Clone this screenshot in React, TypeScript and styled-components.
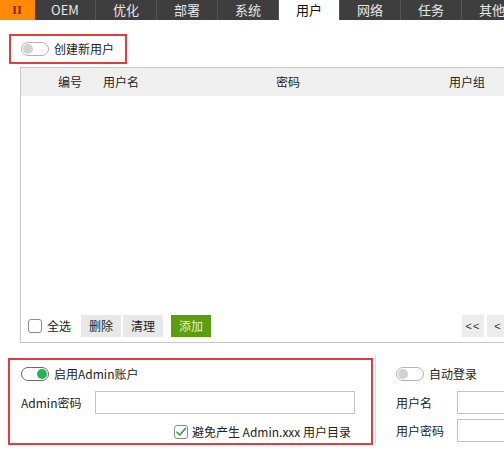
import React from "react";
import styled, { createGlobalStyle } from "styled-components";

const Global = createGlobalStyle`
  html, body { margin: 0; padding: 0; background: #fff; overflow: hidden; }
  body {
    font-family: "Noto Sans CJK SC", "Open Sans", sans-serif;
    font-size: 12px;
    color: #222;
  }
  * { box-sizing: border-box; }
`;

const Page = styled.div`
  width: 560px;
  height: 460px;
  display: flex;
  flex-direction: column;
`;

const TabBar = styled.div`
  display: flex;
  height: 20px;
  background: #3e3e3e;
`;

const Tab = styled.div<{ $active?: boolean; $brand?: boolean }>`
  flex: none;
  width: ${(p) => (p.$brand ? 35 : 61)}px;
  height: 20px;
  border-right: 1px solid ${(p) => (p.$brand ? "#ff8a00" : "#565656")};
  background: ${(p) => (p.$brand ? "#ff8a00" : p.$active ? "#ffffff" : "#3e3e3e")};
  color: ${(p) => (p.$brand ? "#8a2a0c" : p.$active ? "#111" : "#e8e8e8")};
  font-family: ${(p) => (p.$brand ? '"Liberation Serif", serif' : '"Noto Sans CJK SC", "Open Sans", sans-serif')};
  font-weight: ${(p) => (p.$brand ? 700 : 400)};
  font-size: 13px;
  line-height: 20px;
  display: flex;
  align-items: center;
  justify-content: center;
`;

const RedBox = styled.div<{ $w: number; $h: number }>`
  width: ${(p) => p.$w}px;
  height: ${(p) => p.$h}px;
  border: 2px solid #e23c3f;
  flex: none;
`;

const TopSection = styled.div`
  margin: 14px 0 0 9px;
`;

const ToggleRow = styled.div`
  display: flex;
  align-items: center;
  gap: 5px;
  height: 100%;
  padding-left: 10px;
  line-height: 16px;
`;

const Toggle = styled.div<{ $on?: boolean }>`
  position: relative;
  width: 28px;
  height: 14px;
  border-radius: 7px;
  border: 1px solid ${(p) => (p.$on ? "#6a6a6a" : "#b4b4b4")};
  background: #fff;
  flex: none;
  &::after {
    content: "";
    position: absolute;
    top: 1px;
    ${(p) => (p.$on ? "right: 1px;" : "left: 1px;")}
    width: 10px;
    height: 10px;
    border-radius: 50%;
    background: ${(p) => (p.$on ? "#27b450" : "#d2d2d2")};
  }
`;

const Table = styled.div`
  margin: 3px 0 0 20px;
  width: 540px;
  height: 276px;
  border: 1px solid #c9c9c9;
  border-right: none;
  display: flex;
  flex-direction: column;
`;

const HeaderRow = styled.div`
  height: 28px;
  background: #efefef;
  display: flex;
  align-items: center;
  line-height: 16px;
`;

const Cell = styled.div<{ $w: number; $align?: string }>`
  flex: none;
  width: ${(p) => p.$w}px;
  text-align: ${(p) => p.$align || "left"};
  white-space: nowrap;
`;

const TableBody = styled.div`
  flex: 1;
`;

const Footer = styled.div`
  display: flex;
  align-items: center;
  height: 22px;
  margin: 0 0 5px 7px;
  line-height: 16px;
`;

const CheckBox = styled.div`
  width: 14px;
  height: 14px;
  border: 1px solid #8a8a8a;
  border-radius: 3px;
  background: #fff;
  flex: none;
  display: flex;
  align-items: center;
  justify-content: center;
`;

const CheckLabel = styled.span`
  margin-left: 5px;
`;

const Btn = styled.div<{ $green?: boolean; $ml?: number; $w?: number }>`
  flex: none;
  width: ${(p) => p.$w ?? 40}px;
  height: 22px;
  margin-left: ${(p) => p.$ml ?? 0}px;
  background: ${(p) => (p.$green ? "#5b9e0e" : "#e8e8e8")};
  color: ${(p) => (p.$green ? "#e6f3d6" : "#222")};
  display: flex;
  align-items: center;
  justify-content: center;
  line-height: 16px;
`;

const Spacer = styled.div`
  flex: 1;
`;

const PagerGroup = styled.div`
  display: flex;
  gap: 3px;
  width: 98px;
  flex: none;
`;

const PagerBtn = styled.div`
  width: 22px;
  height: 22px;
  background: #ececec;
  color: #333;
  display: flex;
  align-items: center;
  justify-content: center;
  font-family: "Liberation Sans", sans-serif;
  font-size: 11px;
  letter-spacing: 1px;
`;

const Bottom = styled.div`
  display: flex;
  margin-top: 15px;
`;

const AdminBox = styled(RedBox)`
  margin-left: 8px;
  padding: 6px 16px 4px 11px;
  display: flex;
  flex-direction: column;
`;

const Line = styled.div<{ $h: number; $mt?: number }>`
  display: flex;
  align-items: center;
  height: ${(p) => p.$h}px;
  margin-top: ${(p) => p.$mt ?? 0}px;
  line-height: 16px;
  gap: 5px;
`;

const FieldLabel = styled.div<{ $w: number }>`
  flex: none;
  width: ${(p) => p.$w}px;
  white-space: nowrap;
`;

const Input = styled.div<{ $w: number }>`
  flex: none;
  width: ${(p) => p.$w}px;
  height: 23px;
  border: 1px solid #c4c4c4;
  background: #fff;
`;

const EndLine = styled(Line)`
  justify-content: flex-end;
  padding-right: 4px;
  gap: 4px;
`;

const Divider = styled.div`
  flex: none;
  width: 1px;
  height: 90px;
  margin: -3px 0 0 2px;
  background: #dedede;
`;

const AutoLogin = styled.div`
  padding: 8px 0 0 20px;
  display: flex;
  flex-direction: column;
`;

const Row = styled.div`
  display: flex;
  align-items: center;
  gap: 5px;
  line-height: 16px;
`;

const FormLine = styled(Row)<{ $mt: number }>`
  margin-top: ${(p) => p.$mt}px;
  gap: 0;
`;

const Check = () => (
  <svg width="12" height="12" viewBox="0 0 12 12">
    <path d="M2 6.2 L4.8 9 L10.4 2.4" fill="none" stroke="#3a9a3a" strokeWidth="1.6" strokeLinecap="round" strokeLinejoin="round" />
  </svg>
);

const tabs = ["OEM", "优化", "部署", "系统", "用户", "网络", "任务", "其他"];

export default function App() {
  return (
    <Page>
      <Global />
      <TabBar>
        <Tab $brand>II</Tab>
        {tabs.map((t) => (
          <Tab key={t} $active={t === "用户"}>
            {t}
          </Tab>
        ))}
      </TabBar>

      <TopSection>
        <RedBox $w={118} $h={30}>
          <ToggleRow>
            <Toggle />
            <span>创建新用户</span>
          </ToggleRow>
        </RedBox>
      </TopSection>

      <Table>
        <HeaderRow>
          <Cell $w={37} />
          <Cell $w={45}>编号</Cell>
          <Cell $w={140}>用户名</Cell>
          <Cell $w={90} $align="center">密码</Cell>
          <Cell $w={116} />
          <Cell $w={60}>用户组</Cell>
        </HeaderRow>
        <TableBody />
        <Footer>
          <CheckBox />
          <CheckLabel>全选</CheckLabel>
          <Btn $ml={10}>删除</Btn>
          <Btn $ml={2}>清理</Btn>
          <Btn $ml={8} $green>
            添加
          </Btn>
          <Spacer />
          <PagerGroup>
            <PagerBtn>&lt;&lt;</PagerBtn>
            <PagerBtn>&lt;</PagerBtn>
            <PagerBtn>&gt;</PagerBtn>
          </PagerGroup>
        </Footer>
      </Table>

      <Bottom>
        <AdminBox $w={365} $h={87}>
          <Line $h={16}>
            <Toggle $on />
            <span>启用Admin账户</span>
          </Line>
          <Line $h={23} $mt={9}>
            <FieldLabel $w={69}>Admin密码</FieldLabel>
            <Input $w={260} />
          </Line>
          <EndLine $h={15} $mt={10}>
            <CheckBox>
              <Check />
            </CheckBox>
            <span>避免产生 Admin.xxx 用户目录</span>
          </EndLine>
        </AdminBox>
        <Divider />
        <AutoLogin>
          <Row>
            <Toggle />
            <span>自动登录</span>
          </Row>
          <FormLine $mt={9}>
            <FieldLabel $w={61}>用户名</FieldLabel>
            <Input $w={90} />
          </FormLine>
          <FormLine $mt={5}>
            <FieldLabel $w={61}>用户密码</FieldLabel>
            <Input $w={90} />
          </FormLine>
        </AutoLogin>
      </Bottom>
    </Page>
  );
}
